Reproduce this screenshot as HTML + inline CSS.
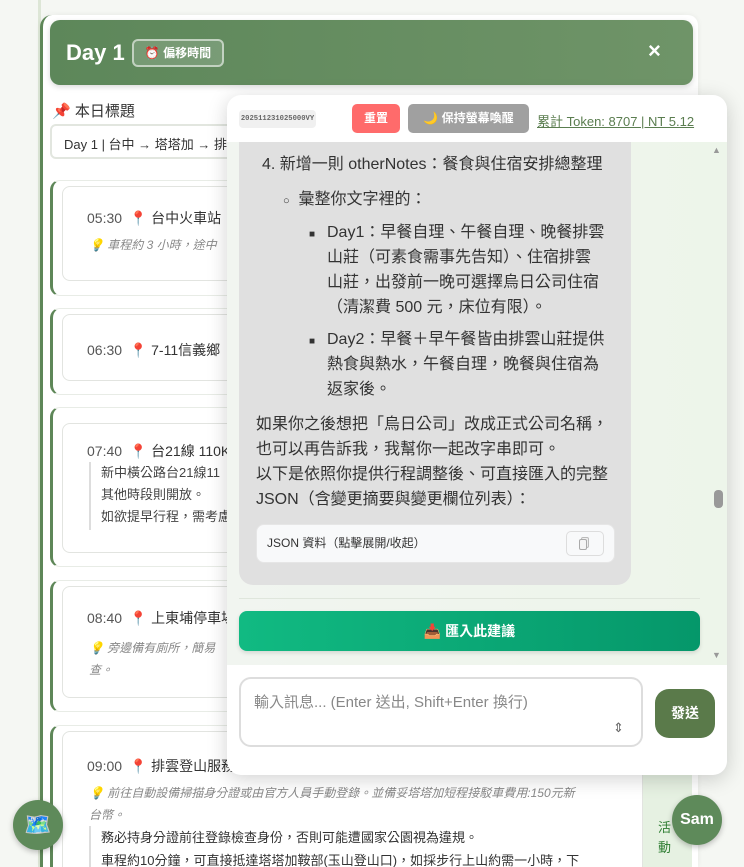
<!DOCTYPE html>
<html><head><meta charset="utf-8">
<style>
*{box-sizing:border-box;margin:0;padding:0}
html{width:744px;height:867px;overflow:hidden}
body{width:744px;height:867px;overflow:hidden;background:#f5f7f3;font-family:"Liberation Sans","Noto Sans CJK TC",sans-serif;position:relative;color:#333}
.abs{position:absolute}
.outer{left:40px;top:15px;width:658px;height:852px;background:#fff;border-left:3px solid #5e8758;border-radius:12px 10px 0 0;box-shadow:0 0 6px rgba(0,0,0,.06)}
.rail{left:38px;top:0;width:3px;height:867px;background:#dde6d6}
.hdr{left:50px;top:20px;width:643px;height:65px;border-radius:10px;background:linear-gradient(90deg,#5d875a,#6f9468);box-shadow:0 2px 6px rgba(0,0,0,.15)}
.item{left:50px;width:650px;border-left:3px solid #5e8758;border-radius:10px 0 0 10px;background:#fff;border-top:1px solid #e8ece6;border-bottom:1px solid #e8ece6}
.card{position:absolute;left:9px;right:0;border:1px solid #e2e4e0;border-radius:8px;background:#fff}
.t{position:absolute;font-size:14px;color:#555;white-space:nowrap}
.tip{position:absolute;font-size:12px;font-style:italic;color:#888;white-space:nowrap}
.panel{left:227px;top:95px;width:500px;height:680px;background:#fff;border-radius:14px;box-shadow:0 4px 20px rgba(0,0,0,.18);overflow:hidden}
.msg{position:absolute;left:0;top:47px;width:500px;height:523px;background:linear-gradient(90deg,#f1f5f0,#edf5ea)}
.bub{position:absolute;left:12px;top:0;width:392px;height:443px;background:#e0e0e0;border-radius:0 0 14px 14px;font-size:16px;line-height:25px;color:#333}
.bub div{position:absolute;white-space:nowrap}
</style></head><body>
<div class="abs rail"></div>
<div class="abs outer"></div>
<div class="abs hdr">
 <div class="abs" style="left:16px;top:20px;color:#fff;font-size:22px;font-weight:bold">Day 1</div>
 <div class="abs" style="left:82px;top:19px;width:92px;height:28px;border:2px solid rgba(255,255,255,.55);border-radius:6px;background:rgba(255,255,255,.15);color:#fff;font-size:12px;font-weight:bold;line-height:24px;text-align:center">⏰ 偏移時間</div>
 <div class="abs" style="left:598px;top:18px;color:#fff;font-size:22px;font-weight:bold">×</div>
</div>
<div class="abs" style="left:52px;top:100px;font-size:15px;color:#333">📌 本日標題</div>
<div class="abs" style="left:50px;top:124px;width:400px;height:35px;border:2px solid #e2e6df;border-radius:6px;background:#fff;font-size:13px;padding:8px 12px;white-space:nowrap">Day 1 | 台中 → 塔塔加 → 排雲</div>

<div class="abs item" style="top:180px;height:116px"><div class="card" style="top:5px;height:95px">
 <div class="t" style="left:24px;top:21px">05:30 &nbsp;📍 <span style="color:#333">台中火車站</span></div>
 <div class="tip" style="left:26px;top:49px">💡 車程約 3 小時，途中</div></div></div>
<div class="abs item" style="top:308px;height:87px"><div class="card" style="top:5px;height:67px">
 <div class="t" style="left:24px;top:25px">06:30 &nbsp;📍 <span style="color:#333">7-11信義鄉</span></div></div></div>
<div class="abs item" style="top:407px;height:160px"><div class="card" style="top:15px;height:130px">
 <div class="t" style="left:24px;top:17px">07:40 &nbsp;📍 <span style="color:#333">台21線 110K</span></div>
 <div class="abs" style="left:26px;top:38px;border-left:2px solid #ddd;padding-left:10px;font-size:13px;line-height:22px;color:#444;height:68px">新中橫公路台21線11<br>其他時段則開放。<br>如欲提早行程，需考慮</div></div></div>
<div class="abs item" style="top:580px;height:132px"><div class="card" style="top:5px;height:112px">
 <div class="t" style="left:24px;top:21px">08:40 &nbsp;📍 <span style="color:#333">上東埔停車場</span></div>
 <div class="tip" style="left:26px;top:50px;line-height:22px">💡 旁邊備有廁所，簡易<br>查。</div></div></div>
<div class="abs" style="left:640px;top:712px;width:52px;height:155px;background:#e6f1e2"></div>
<div class="abs item" style="top:725px;height:160px;width:593px"><div class="card" style="top:5px;height:160px">
 <div class="t" style="left:24px;top:24px">09:00 &nbsp;📍 <span style="color:#333">排雲登山服務站</span></div>
 <div class="tip" style="left:26px;top:50px;line-height:22px">💡 前往自動設備掃描身分證或由官方人員手動登錄。並備妥塔塔加短程接駁車費用:150元新<br>台幣。</div>
 <div class="abs" style="left:26px;top:94px;border-left:2px solid #ddd;padding-left:10px;font-size:13px;line-height:23px;color:#333;white-space:nowrap">務必持身分證前往登錄檢查身份，否則可能遭國家公園視為違規。<br>車程約10分鐘，可直接抵達塔塔加鞍部(玉山登山口)，如採步行上山約需一小時，下</div></div></div>
<div class="abs" style="left:658px;top:818px;font-size:13px;line-height:20px;color:#2e7d32;width:14px">活動</div>

<div class="abs panel">
 <div class="abs" style="left:12px;top:15px;width:77px;height:18px;background:#f0f0f0;border-radius:4px;font-family:'Liberation Mono',monospace;font-size:7.2px;font-weight:bold;color:#666;line-height:18px;text-align:center;white-space:nowrap;overflow:hidden">202511231025000VY</div>
 <div class="abs" style="left:125px;top:9px;width:48px;height:29px;background:#ff6b6b;border-radius:5px;color:#fff;font-size:12px;font-weight:bold;line-height:29px;text-align:center">重置</div>
 <div class="abs" style="left:181px;top:9px;width:121px;height:29px;background:#a0a0a0;border-radius:5px;color:#fff;font-size:12px;font-weight:bold;line-height:29px;text-align:center">🌙 保持螢幕喚醒</div>
 <div class="abs" style="left:310px;top:16px;font-size:13px;color:#5a7d4f;text-decoration:underline;white-space:nowrap">累計 Token: 8707 | NT 5.12</div>
 <div class="msg">
  <div class="bub">
   <div style="left:23px;top:10px">4. 新增一則 otherNotes：餐食與住宿安排總整理</div>
   <div style="left:44px;top:45px"><span style="font-size:11px">○</span>&nbsp; 彙整你文字裡的：</div>
   <div style="left:70px;top:78px"><span style="font-size:10px">■</span></div>
   <div style="left:88px;top:78px">Day1：早餐自理、午餐自理、晚餐排雲<br>山莊（可素食需事先告知）、住宿排雲<br>山莊，出發前一晚可選擇烏日公司住宿<br>（清潔費 500 元，床位有限）。</div>
   <div style="left:70px;top:185px"><span style="font-size:10px">■</span></div>
   <div style="left:88px;top:185px">Day2：早餐＋早午餐皆由排雲山莊提供<br>熱食與熱水，午餐自理，晚餐與住宿為<br>返家後。</div>
   <div style="left:17px;top:270px">如果你之後想把「烏日公司」改成正式公司名稱，<br>也可以再告訴我，我幫你一起改字串即可。<br>以下是依照你提供行程調整後、可直接匯入的完整<br>JSON（含變更摘要與變更欄位列表）：</div>
   <div style="left:17px;top:382px;width:359px;height:39px;background:#f8f9fa;border:1px solid #e6e6e6;border-radius:8px;font-size:12px;line-height:37px;padding-left:10px">JSON 資料（點擊展開/收起）</div>
   <div style="left:327px;top:389px;width:38px;height:25px;border:1px solid #ddd;border-radius:5px"></div>
   <div style="left:342px;top:395px;width:8px;height:11px;border:1.5px solid #bbb;border-radius:2px;background:#eee"></div>
   <div style="left:340px;top:397px;width:8px;height:11px;border:1.5px solid #aaa;border-radius:2px;background:#f5f5f5"></div>
  </div>
  <div class="abs" style="left:12px;top:456px;width:461px;height:1px;background:#dfe6dc"></div>
  <div class="abs" style="left:12px;top:469px;width:461px;height:40px;border-radius:8px;background:linear-gradient(90deg,#11ba82,#05976a);color:#fff;font-size:14px;font-weight:bold;text-align:center;line-height:40px;box-shadow:0 2px 4px rgba(0,0,0,.12)">📥 匯入此建議</div>
  <div class="abs" style="left:485px;top:3px;color:#999;font-size:9px">▲</div>
  <div class="abs" style="left:487px;top:348px;width:9px;height:18px;background:#999;border-radius:4px"></div>
  <div class="abs" style="left:485px;top:508px;color:#999;font-size:9px">▼</div>
 </div>
 <div class="abs" style="left:12px;top:582px;width:404px;height:70px;border:2px solid #ddd;border-radius:12px;font-size:15px;color:#888;padding:12px 13px">輸入訊息... (Enter 送出, Shift+Enter 換行)</div>
 <div class="abs" style="left:386px;top:625px;font-size:13px;color:#666">⇕</div>
 <div class="abs" style="left:428px;top:594px;width:60px;height:49px;background:#5a7a4a;border-radius:14px;color:#fff;font-size:14px;font-weight:bold;text-align:center;line-height:49px">發送</div>
</div>

<div class="abs" style="left:13px;top:800px;width:50px;height:50px;border-radius:50%;background:#5e8a5a;box-shadow:0 2px 6px rgba(0,0,0,.25);text-align:center;line-height:50px;font-size:22px">🗺️</div>
<div class="abs" style="left:672px;top:795px;width:50px;height:50px;border-radius:50%;background:#5e8a5a;box-shadow:0 2px 6px rgba(0,0,0,.25);text-align:center;line-height:50px;font-size:16px;font-weight:bold;color:#fff">Sam</div>
</body></html>
